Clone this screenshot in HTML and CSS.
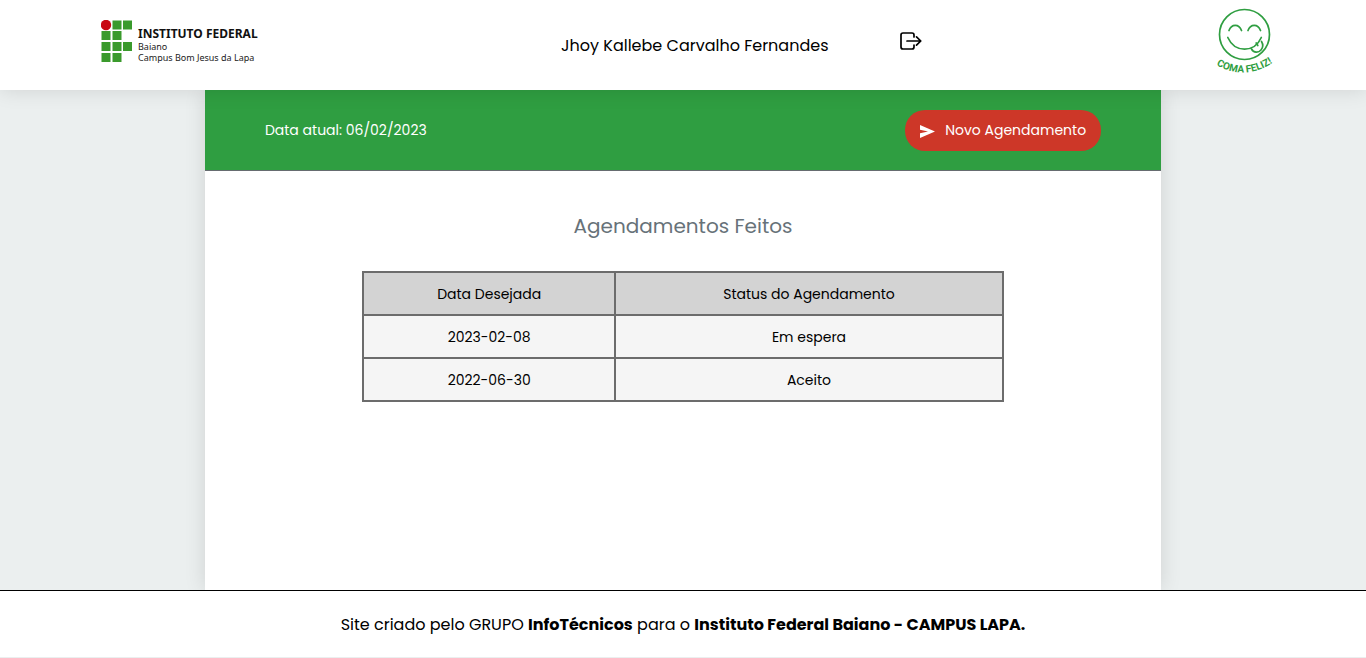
FILE: index.html
```html
<!DOCTYPE html>
<html lang="pt-BR">
<head>
<meta charset="utf-8">
<meta name="viewport" content="width=device-width, initial-scale=1">
<title>Agendamentos</title>
<link rel="stylesheet" href="styles.css">
</head>
<body>
<header class="topbar">
  <a class="institute" href="#" aria-label="Instituto Federal Baiano">
    <svg class="institute-mark" viewBox="0 0 32 43" aria-hidden="true">
      <circle cx="5" cy="5" r="5.200" fill="#c80812"/>
      <path fill="#3a9a2c" d="M11.500 .5h9v9h-9zM22 .5h9v9h-9zM.5 11h9v9h-9zM11.500 11h9v9h-9zM.5 22h9v9h-9zM11.500 22h9v9h-9zM22 22h9v9h-9zM.5 33h9v9h-9zM11.500 33h9v9h-9z"/>
    </svg>
    <span class="institute-text">
      <strong class="institute-name">INSTITUTO FEDERAL</strong>
      <span>Baiano</span>
      <span>Campus Bom Jesus da Lapa</span>
    </span>
  </a>
  <div class="user">
    <p class="user-name">Jhoy Kallebe Carvalho Fernandes</p>
    <a class="logout" href="#" aria-label="Sair">
      <svg class="logout-icon" viewBox="0 0 24 20" fill="none" stroke="#000" stroke-width="1.700" stroke-linecap="round" stroke-linejoin="round" aria-hidden="true">
        <path d="M15 6V4a2 2 0 0 0-2-2H4a2 2 0 0 0-2 2v12a2 2 0 0 0 2 2h9a2 2 0 0 0 2-2v-2M8 10h13.500M17.500 5.800 21.800 10l-4.300 4.200"/>
      </svg>
    </a>
  </div>
  <a class="brand" href="#" aria-label="Coma Feliz">
    <svg class="brand-logo" viewBox="-2 0 64 70" fill="none" stroke="#2f9e41" stroke-width="1.700" stroke-linecap="round">
      <circle cx="30.500" cy="28.500" r="25"/>
      <path d="M15 24.500c2.500-6.800 10-6.800 12.500 0M34 24.500c2.500-6.800 10-6.800 12.500 0M13.800 31.500c7 15.500 26.500 15.500 33.500 0"/>
      <path d="M37.500 43c2 4 7 4 9.500 1s2-6 .5-8.500M42.200 37l1.600 2.500"/>
      <path id="arc" stroke="none" d="M1 58Q30 76 60 56"/>
      <text class="brand-text"><textPath href="#arc" startOffset="50%" text-anchor="middle">COMA FELIZ!</textPath></text>
    </svg>
  </a>
</header>
<main class="page">
  <section class="panel">
    <div class="toolbar">
      <p class="today">Data atual: 06/02/2023</p>
      <button class="new-button" type="button">
        <svg class="send-icon" viewBox="0 0 15 14" aria-hidden="true"><path fill="#fff" d="M0 1 15 7.500 0 14V9.200L8 7.500 0 5.800z"/></svg>
        Novo Agendamento
      </button>
    </div>
    <h1 class="title">Agendamentos Feitos</h1>
    <table class="schedule">
      <thead><tr><th class="col-date">Data Desejada</th><th>Status do Agendamento</th></tr></thead>
      <tbody>
        <tr><td>2023-02-08</td><td>Em espera</td></tr>
        <tr><td>2022-06-30</td><td>Aceito</td></tr>
      </tbody>
    </table>
  </section>
</main>
<footer class="footer">
  <p>Site criado pelo GRUPO <strong>InfoTécnicos</strong> para o <strong>Instituto Federal Baiano - CAMPUS LAPA.</strong></p>
</footer>
</body>
</html>
```
FILE: styles.css
```css
* { box-sizing: border-box; margin: 0; padding: 0; }

body {
  display: flex;
  flex-direction: column;
  min-height: 100vh;
  background: #ebefef;
  color: #000;
  font-family: Poppins, Inter, sans-serif;
  font-size: 16px;
}

a { color: inherit; text-decoration: none; }

.topbar {
  position: relative;
  z-index: 1;
  display: flex;
  align-items: center;
  justify-content: space-between;
  min-height: 90px;
  padding: 0 90px 0 101px;
  background: #fff;
  box-shadow: 0 0 20px rgba(0, 0, 0, .12);
}

.institute { display: flex; align-items: center; gap: 5px; padding: 0 14px 8px 0; }
.institute-mark { width: 32px; height: 43px; }
.institute-text {
  display: flex;
  flex-direction: column;
  padding-top: 8px;
  font-family: "Noto Sans", sans-serif;
  font-size: 9px;
  line-height: 11px;
  color: #222;
}
.institute-name { font-size: 12px; line-height: 14px; color: #111; }

.user { display: flex; align-items: center; gap: 70px; }
.logout { display: flex; padding-bottom: 8px; }
.logout-icon { width: 24px; height: 20px; }

.brand { display: flex; padding-bottom: 8px; }
.brand-logo { width: 64px; height: 70px; }
.brand-text { fill: #2f9e41; stroke: none; font-family: Roboto, sans-serif; font-size: 10px; font-weight: 700; }

.page { display: flex; flex: 1; justify-content: center; }
.panel { width: 70%; background: #fff; box-shadow: 0 0 20px rgba(0, 0, 0, .12); }

.toolbar {
  display: flex;
  align-items: center;
  justify-content: space-between;
  padding: 20px 60px 19px;
  background: #2f9e41;
  border-bottom: 1px solid #666c70;
  color: #fff;
  font-size: 14px;
}

.new-button {
  display: flex;
  align-items: center;
  gap: 10px;
  min-height: 41px;
  padding: 0 15px;
  border: 0;
  border-radius: 20px;
  background: #cd3728;
  color: #fff;
  font: inherit;
  cursor: pointer;
}
.send-icon { width: 15px; height: 14px; }

.title {
  padding: 40px 0 30px;
  color: #677279;
  font-size: 20px;
  font-weight: 400;
  line-height: 30px;
  text-align: center;
}

.schedule {
  width: 67.1%;
  margin: 0 auto;
  border-collapse: collapse;
  table-layout: fixed;
  font-size: 14px;
  line-height: 21px;
  text-align: center;
}
.schedule th, .schedule td { padding: 11px 10px 9px; border: 2px solid #6c6c6c; font-weight: 400; }
.schedule th { background: #d3d3d3; }
.schedule td { background: #f5f5f5; }
.schedule .col-date { width: 39.4%; }

.footer {
  position: relative;
  z-index: 1;
  padding: 22px 20px 20px;
  background: #fff;
  border-top: 1px solid #000;
  border-bottom: 1px solid #ebefef;
  line-height: 24px;
  text-align: center;
}
```
